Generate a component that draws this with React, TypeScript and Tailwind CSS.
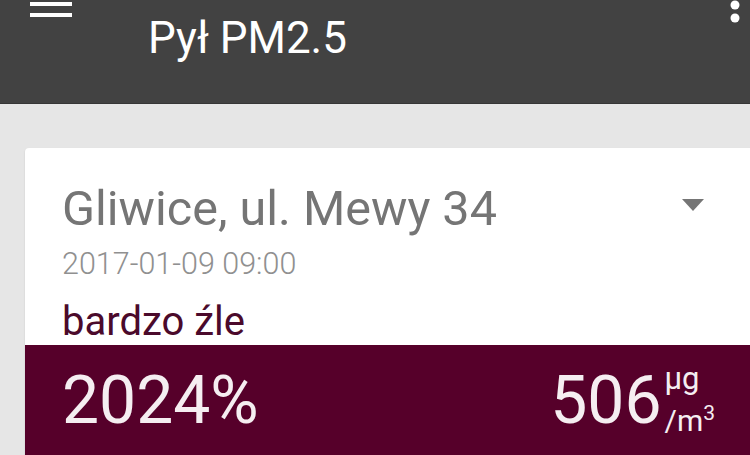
import React from "react"

const font = { fontFamily: "Roboto, 'Noto Sans', sans-serif" }

function MenuIcon() {
  return (
    <svg width="42" height="18" viewBox="0 0 42 18" className="block">
      <rect x="0" y="2" width="42" height="4" fill="#ffffff" />
      <rect x="0" y="13" width="42" height="4" fill="#ffffff" />
    </svg>
  )
}

function MoreIcon() {
  return (
    <svg width="10" height="24" viewBox="0 0 10 24" className="block">
      <circle cx="5" cy="5" r="4.5" fill="#ffffff" />
      <circle cx="5" cy="18" r="4.5" fill="#ffffff" />
    </svg>
  )
}

export default function App() {
  return (
    <div className="h-[455px] w-[750px] overflow-hidden bg-[#e6e6e6]" style={font}>
      <header className="flex h-[104px] items-start border-b border-[#363636] bg-[#424242] text-white">
        <div className="ml-[30px]">
          <MenuIcon />
        </div>
        <h1 className="ml-[76px] mt-[16px] text-[44px] font-normal leading-none">Pył PM2.5</h1>
        <div className="ml-auto mr-[10px]">
          <MoreIcon />
        </div>
      </header>

      <main className="pl-[25px] pt-[44px]">
        <section className="w-[760px] overflow-hidden rounded-[4px] bg-white shadow-[0_1px_2px_rgba(0,0,0,0.12)]">
          <div className="px-[37px] pt-[37px]">
            <div className="flex items-start justify-between">
              <h2 className="text-[48.5px] font-normal leading-none text-[#757575]">Gliwice, ul. Mewy 34</h2>
              <svg width="22" height="12" viewBox="0 0 22 12" className="mr-[44px] mt-[14px] block">
                <path d="M0 0 L22 0 L11 12 Z" fill="#757575" />
              </svg>
            </div>
            <div className="mt-[15px] text-[30.5px] font-light leading-none text-[#909090]">2017-01-09 09:00</div>
            <div className="mt-[23px] pb-[3px] text-[40px] leading-none text-[#4b0a2b]">bardzo źle</div>
          </div>

          <div className="flex h-[120px] items-start bg-[#56002a] pl-[37px] pr-[70px] pt-[23px] text-[#f5eef1]">
            <div className="text-[66px] leading-none">2024%</div>
            <div className="ml-auto flex items-start">
              <div className="text-[66px] leading-none">506</div>
              <div className="ml-[3px] flex flex-col">
                <span className="mt-[-5px] text-[31px] leading-none">µg</span>
                <span className="mt-[12px] text-[30px] leading-none">
                  /m<span className="relative top-[-11px] text-[21px]">3</span>
                </span>
              </div>
            </div>
          </div>
        </section>
      </main>
    </div>
  )
}
